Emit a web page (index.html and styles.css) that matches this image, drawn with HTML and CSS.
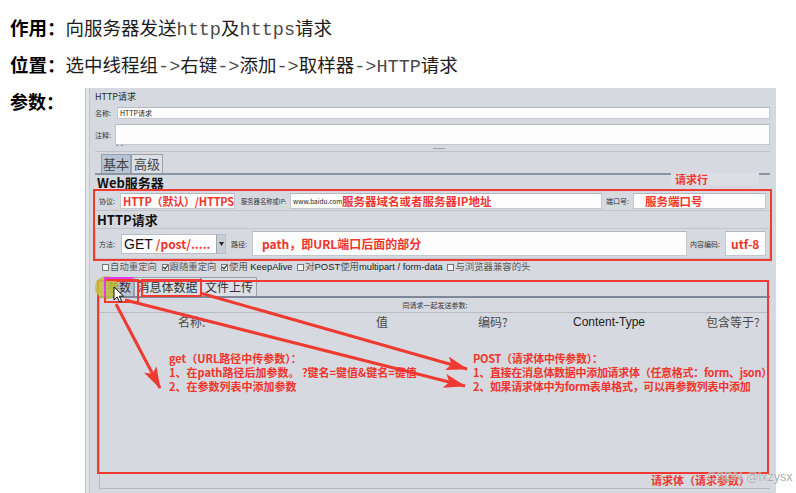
FILE: index.html
```html
<!DOCTYPE html>
<html lang="zh-CN">
<head>
<meta charset="utf-8">
<title>HTTP请求</title>
<link rel="stylesheet" href="styles.css">
</head>
<body>
<div class="page">
  <p class="line"><b>作用：</b>向服务器发送<span class="mono">http</span>及<span class="mono">https</span>请求</p>
  <p class="line"><b>位置：</b>选中线程组<span class="mono">-&gt;</span>右键<span class="mono">-&gt;</span>添加<span class="mono">-&gt;</span>取样器<span class="mono">-&gt;HTTP</span>请求</p>
  <div class="params">
    <div class="plabel">参数：</div>
    <div class="shot">
      <div class="s-title">HTTP请求</div>
      <div class="frow name"><span class="lbl">名称:</span><div class="inp"><span class="tiny">HTTP请求</span></div></div>
      <div class="frow comment"><span class="lbl">注释:</span><div class="inp"></div></div>
      <div class="split"><span class="dots">‥</span><span class="dash"></span></div>
      <div class="tabs1"><span class="tab sel">基本</span><span class="tab">高级</span></div>
      <div class="sec">Web服务器</div>
      <div class="row1">
        <span class="lbl l-proto">协议:</span>
        <div class="inp proto"><span class="red">HTTP（默认）/HTTPS</span></div>
        <span class="lbl l-host">服务器名称或IP:</span>
        <div class="inp host"><span class="tiny url">www.baidu.com</span><span class="red">服务器域名或者服务器IP地址</span></div>
        <span class="lbl l-port">端口号:</span>
        <div class="inp port"><span class="red">服务端口号</span></div>
      </div>
      <div class="sec sec2">HTTP请求</div>
      <div class="row2">
        <span class="lbl l-method">方法:</span>
        <div class="select"><span class="get">GET</span><span class="red">/post/.....</span><span class="drop"><svg width="5" height="4" viewBox="0 0 5 4"><path d="M0 0H5L2.5 4Z" fill="#222"/></svg></span></div>
        <span class="lbl l-path">路径:</span>
        <div class="inp path"><span class="red">path，即URL端口后面的部分</span></div>
        <span class="lbl l-enc">内容编码:</span>
        <div class="inp enc"><span class="red">utf-8</span></div>
      </div>
      <div class="checks">
        <span class="cb"></span><span class="cj">自动重定向</span>
        <span class="cb on"></span><span class="cj">跟随重定向</span>
        <span class="cb on"></span><span class="cj">使用</span> KeepAlive
        <span class="cb"></span><span class="cj">对</span>POST<span class="cj">使用</span>multipart / form-data
        <span class="cb"></span><span class="cj">与浏览器兼容的头</span>
      </div>
      <div class="tabs2"><span class="tab t-param sel">参数</span><span class="tab t-body">消息体数据</span><span class="tab t-file">文件上传</span></div>
      <div class="tabpanel">
        <div class="caption">同请求一起发送参数:</div>
        <div class="thead"><span>名称:</span><span>值</span><span>编码?</span><span class="en">Content-Type</span><span>包含等于?</span></div>
      </div>

      <div class="box box-line"></div>
      <div class="tag tag-line">请求行</div>
      <div class="box box-body"></div>
      <div class="hl"></div>
      <div class="box box-param"></div>
      <div class="box box-magenta"></div>
      <div class="box box-msg"></div>
      <svg class="cursor" width="12" height="17" viewBox="0 0 12 17"><path d="M1 1V14L4.2 11L6.6 16L8.6 15.1L6.3 10.2H10.5Z" fill="#fff" stroke="#111" stroke-width="1"/></svg>
      <svg class="arrows" width="690" height="405" viewBox="0 0 690 405">
        <defs>
          <marker id="ah" markerUnits="userSpaceOnUse" markerWidth="22" markerHeight="14" refX="21" refY="7" orient="auto">
            <path d="M0 0L22 7L0 14L5 7Z" fill="#ef3a32"/>
          </marker>
        </defs>
        <line x1="114" y1="205" x2="381" y2="281" stroke="#ef3a32" stroke-width="3" marker-end="url(#ah)"/>
        <line x1="39" y1="212" x2="379" y2="298" stroke="#ef3a32" stroke-width="3" marker-end="url(#ah)"/>
        <line x1="30" y1="216" x2="74" y2="300" stroke="#ef3a32" stroke-width="3" marker-end="url(#ah)"/>
      </svg>
      <div class="note note-get">
        <p>get（URL路径中传参数）：</p>
        <p>1、在path路径后加参数。 ?键名=键值&amp;键名=键值</p>
        <p>2、在参数列表中添加参数</p>
      </div>
      <div class="note note-post">
        <p>POST（请求体中传参数）：</p>
        <p>1、直接在消息体数据中添加请求体（任意格式：form、json）</p>
        <p>2、如果请求体中为form表单格式，可以再参数列表中添加</p>
      </div>
      <div class="tag tag-body">请求体（请求参数）</div>
    </div>
    <div class="watermark">CSDN @lxzysx</div>
  </div>
</div>
</body>
</html>
```
FILE: styles.css
```css
* { box-sizing: border-box; }
html, body { margin: 0; background: #fff; }
body {
  width: 796px;
  height: 493px;
  overflow: hidden;
  font-family: "Noto Sans CJK SC", "Noto Sans", sans-serif;
  color: #1c1c1c;
}
.page { padding: 14px 0 0 10px; }
.line {
  margin: 0 0 11px;
  height: 26px;
  font-size: 18.5px;
  line-height: 26px;
  white-space: nowrap;
}
.line b { font-weight: 700; color: #000; }
.mono { font-family: "Liberation Mono", "DejaVu Sans Mono", monospace; color: #4a4a4a; }
.params { position: relative; display: flex; align-items: flex-start; }
.plabel { width: 75px; font-size: 18px; font-weight: 700; line-height: 26px; color: #000; }

/* screenshot panel */
.shot {
  position: relative;
  width: 691px;
  height: 405px;
  overflow: hidden;
  background: #d6d9e0;
  border-left: 1px solid #b9bdc5;
  padding: 4px 6px 0 9px;
  box-shadow: inset 3px 0 0 #e1e3e8, inset 4px 0 0 #c2c6ce;
  font-size: 7px;
  color: #333;
}
.s-title { height: 10px; line-height: 10px; font-size: 9px; color: #2a2a2a; }
.lbl { flex: none; font-size: 7px; color: #333; white-space: nowrap; overflow: hidden; }
.inp { background: #fdfdfd; border: 1px solid #c3c7ce; border-top-color: #b3b7bf; height: 100%; display: flex; align-items: center; overflow: visible; white-space: nowrap; }
.tiny { font-size: 7px; color: #222; padding-left: 2px; }
.frow { display: flex; align-items: center; margin-top: 5px; }
.frow.name { height: 12px; }
.frow.name .lbl { width: 22px; }
.frow.comment { height: 21px; }
.frow.comment .lbl { width: 20px; }
.frow .inp { flex: 1; }
.split { position: relative; height: 7px; border-bottom: 1px solid #bcc0c8; }
.dots { position: absolute; left: 20px; top: -4px; font-size: 9px; line-height: 9px; color: #333; }
.dash { position: absolute; left: 338px; top: 3px; width: 12px; height: 1px; background: #9ea3ab; }

.tabs1 { display: flex; height: 21px; margin-top: 2px; padding-left: 6px; border-bottom: 2px solid #8c95a4; }
.tab { height: 19px; border: 1px solid #99a0ac; border-bottom: none; background: #dcdfe5; color: #444; text-align: center; white-space: nowrap; }
.tabs1 .tab { font-size: 13px; line-height: 17px; }
.tabs1 .tab:nth-child(1) { width: 30px; }
.tabs1 .tab:nth-child(2) { width: 32px; }
.tab.sel { background: #b6c4d4; }

.sec { height: 16px; line-height: 16px; font-size: 13px; font-weight: 700; color: #111; padding-left: 2px; }
.sec2 { margin-top: 1px; }
.red { color: #f0352d; font-weight: 700; font-size: 11.5px; white-space: nowrap; }

.row1 { display: flex; align-items: center; height: 20px; padding: 2px 4px 1px; border-bottom: 1px solid #c1c5cc; }
.l-proto { width: 21px; }
.proto { width: 115px; }
.proto .red { padding-left: 2px; font-size: 11px; letter-spacing: -0.2px; }
.l-host { width: 49px; margin-left: 6px; font-size: 6.3px; }
.host { width: 312px; }
.host .url { width: 51px; font-size: 6.5px; overflow: hidden; }
.l-port { width: 27px; margin-left: 4px; }
.port { width: 133px; }
.port .red { padding-left: 11px; }

.row2 { display: flex; align-items: center; height: 31px; border: 1px solid #c1c5cc; padding: 0 3px; }
.l-method { width: 22px; }
.select { width: 105px; height: 20px; background: #fdfdfd; border: 1px solid #b9bdc4; display: flex; align-items: center; padding-left: 2px; position: relative; }
.get { font-size: 14px; color: #111; font-family: "Liberation Sans", "Noto Sans", sans-serif; margin-right: 3px; }
.select .red { font-size: 12px; }
.drop { position: absolute; right: 0; top: 0; bottom: 0; width: 9px; background: #c9cdd4; border-left: 1px solid #9ea4ae; display: flex; align-items: center; justify-content: center; }
.l-path { width: 21px; margin-left: 5px; }
.path { width: 435px; height: 25px; }
.path .red { padding-left: 9px; font-size: 12px; }
.l-enc { width: 35px; margin-left: 3px; }
.enc { width: 41px; height: 25px; }
.enc .red { padding-left: 5px; font-size: 12px; }

.checks { margin-top: 1px; height: 12px; line-height: 12px; font-size: 9.4px; padding-left: 5px; color: #222; white-space: nowrap; font-family: "Liberation Sans", "Noto Sans CJK SC", sans-serif; }
.cj { color: #5a5a5a; font-family: "Noto Sans CJK SC", sans-serif; }
.cb { display: inline-block; width: 7px; height: 7px; border: 1px solid #777; background: #f4f4f4; vertical-align: -1px; margin: 0 1px 0 2px; position: relative; }
.cb.on::after { content: ""; position: absolute; left: 1px; top: -1px; width: 2px; height: 4px; border: solid #222; border-width: 0 1px 1px 0; transform: rotate(40deg); }

.tabs2 { display: flex; height: 19px; margin-top: 5px; padding-left: 9px; }
.tabs2 .tab { font-size: 12px; line-height: 17px; color: #333; }
.t-param { width: 30px; }
.t-body { width: 67px; }
.t-file { width: 56px; }

.tabpanel { margin-left: 4px; height: 193px; border-top: 2px solid #7f8898; border-left: 1px solid #b4b8c0; border-bottom: 1px solid #b4b8c0; }
.caption { height: 15px; line-height: 14px; font-size: 7px; text-align: center; color: #333; border-bottom: 1px solid #b8bcc4; }
.thead { display: grid; grid-template-columns: 198px 102px 95px 133px auto; height: 18px; line-height: 18px; padding-left: 78px; font-size: 12px; color: #4a4a4a; white-space: nowrap; }
.thead .en { font-family: "Liberation Sans", sans-serif; color: #1e1e1e; }

/* annotation overlays */
.box { position: absolute; border: 2px solid #f03a32; }
.box-line { left: 7px; top: 101px; width: 679px; height: 72px; }
.box-body { left: 11px; top: 192px; width: 672px; height: 194px; }
.box-param { left: 18px; top: 191px; width: 35px; height: 24px; }
.box-magenta { left: 18px; top: 189px; width: 30px; height: 21px; border: 2px solid #e23de8; border-right-color: transparent; border-bottom-color: transparent; }
.box-msg { left: 55px; top: 191px; width: 61px; height: 18px; }
.hl { position: absolute; left: 9px; top: 188px; width: 23px; height: 23px; border-radius: 50%; background: rgba(196, 192, 60, 0.85); }
.cursor { position: absolute; left: 27px; top: 198px; }
.arrows { position: absolute; left: 0; top: 0; }
.tag { position: absolute; color: #f0352d; font-weight: 700; font-size: 11px; line-height: 12px; white-space: nowrap; }
.tag-line { left: 585px; top: 85px; width: 88px; padding-left: 4px; background: #dcdee3; }
.tag-body { left: 565px; top: 386px; font-size: 11px; }
.note { position: absolute; top: 263px; color: #f0352d; font-weight: 700; font-size: 11px; line-height: 14px; white-space: nowrap; }
.note p { margin: 0; }
.note-get { left: 83px; }
.note-post { left: 387px; letter-spacing: -0.3px; }
.watermark { position: absolute; left: 697px; top: 382px; font-family: "Liberation Sans", sans-serif; font-size: 12.5px; line-height: 14px; color: rgba(150, 150, 150, 0.8); text-shadow: 0 0 1px #fff; white-space: nowrap; }
```
